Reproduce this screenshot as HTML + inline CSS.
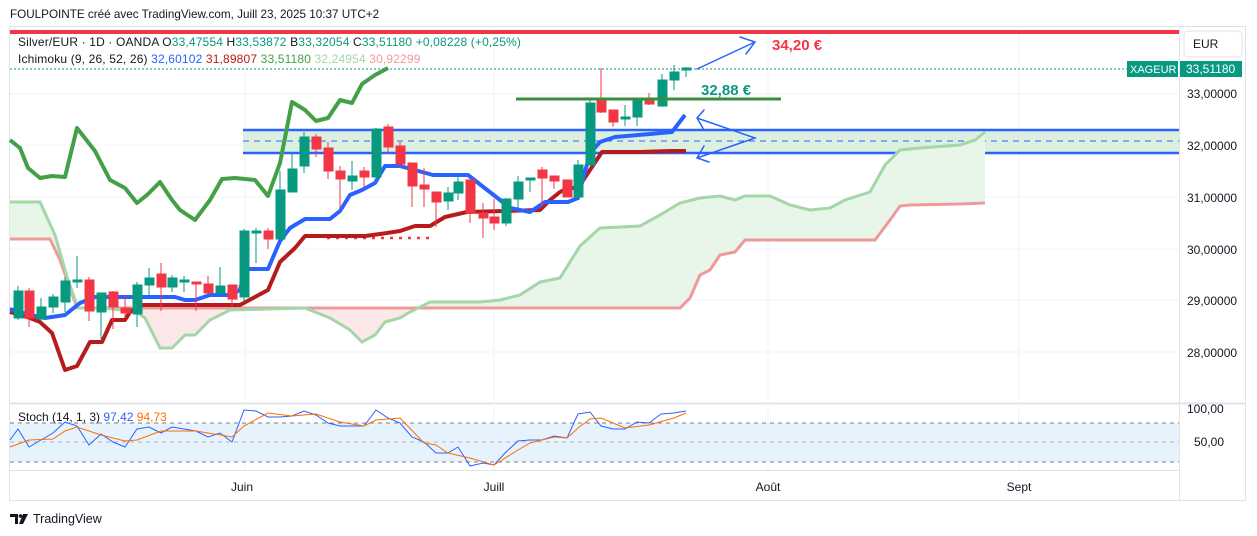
<!DOCTYPE html>
<html><head><meta charset="utf-8"><style>
html,body{margin:0;padding:0;background:#fff;width:1257px;height:536px;overflow:hidden}
svg{display:block;font-family:"Liberation Sans",sans-serif}
</style></head><body>
<svg width="1257" height="536" viewBox="0 0 1257 536" xmlns="http://www.w3.org/2000/svg">
<text x="10" y="18" font-size="11.7" fill="#131722">FOULPOINTE créé avec TradingView.com, Juill 23, 2025 10:37 UTC+2</text>
<rect x="9.5" y="26.5" width="1236" height="474" fill="none" stroke="#e0e3eb"/>
<line x1="1179.5" y1="27" x2="1179.5" y2="500" stroke="#e0e3eb"/>
<line x1="10" y1="403.5" x2="1245" y2="403.5" stroke="#e0e3eb" stroke-width="2"/>
<line x1="10" y1="470.5" x2="1179" y2="470.5" stroke="#e0e3eb"/>
<g stroke="#f0f3fa">
<line x1="10" y1="94" x2="1179" y2="94"/><line x1="10" y1="145" x2="1179" y2="145"/><line x1="10" y1="197" x2="1179" y2="197"/><line x1="10" y1="249" x2="1179" y2="249"/><line x1="10" y1="300" x2="1179" y2="300"/><line x1="10" y1="352" x2="1179" y2="352"/>
<line x1="245" y1="27" x2="245" y2="470"/><line x1="494" y1="27" x2="494" y2="470"/><line x1="768" y1="27" x2="768" y2="470"/><line x1="1019" y1="27" x2="1019" y2="470"/>
</g>
<rect x="10" y="30" width="1169" height="4" fill="#f23645"/>
<rect x="243" y="130" width="936" height="23" fill="#ddf0e0"/>
<line x1="243" y1="130" x2="1179" y2="130" stroke="#2962ff" stroke-width="2.5"/>
<line x1="243" y1="153" x2="1179" y2="153" stroke="#2962ff" stroke-width="2.5"/>
<line x1="243" y1="141" x2="1179" y2="141" stroke="#2962ff" stroke-width="1" stroke-dasharray="6,5"/>
<clipPath id="cg"><rect x="0" y="0" width="72" height="400"/><rect x="420" y="0" width="600" height="400"/></clipPath>
<clipPath id="cr"><rect x="72" y="0" width="348" height="400"/></clipPath>
<polygon clip-path="url(#cg)" fill="#e8f5e9" points="10,202 40,202 55,235 68,280 78,308 100,308 135,311 145,318 160,348 172,348 185,335 195,335 210,320 230,310 305,308 330,318 350,330 362,342 375,335 385,322 400,318 410,312 430,302 480,302 500,300 520,295 540,282 560,278 580,246 600,228 640,226 660,215 680,203 700,198 720,196 735,200 745,196 770,196 790,205 810,210 830,208 845,200 870,192 885,165 900,150 920,148 960,145 975,140 985,132 985,203 960,204 910,205 900,206 890,220 875,240 745,240 735,252 720,255 710,270 700,275 690,298 680,308 78,308 60,260 50,239 10,239"/>
<polygon clip-path="url(#cr)" fill="#fce8e8" points="10,202 40,202 55,235 68,280 78,308 100,308 135,311 145,318 160,348 172,348 185,335 195,335 210,320 230,310 305,308 330,318 350,330 362,342 375,335 385,322 400,318 410,312 430,302 480,302 680,308 78,308"/>
<polyline fill="none" stroke="#ef9a9a" stroke-width="3" points="10,239 50,239 60,260 77,308 680,308 690,298 700,275 710,270 720,255 735,252 745,240 875,240 890,220 900,206 910,205 960,204 985,203"/>
<polyline fill="none" stroke="#a5d6a7" stroke-width="3" points="10,202 40,202 55,235 68,280 78,308 100,308 135,311 145,318 160,348 172,348 185,335 195,335 210,320 230,310 305,308 330,318 350,330 362,342 375,335 385,322 400,318 410,312 430,302 480,302 500,300 520,295 540,282 560,278 580,246 600,228 640,226 660,215 680,203 700,198 720,196 735,200 745,196 770,196 790,205 810,210 830,208 845,200 870,192 885,165 900,150 920,148 960,145 975,140 985,132"/>
<polyline fill="none" stroke="#43a047" stroke-width="4" stroke-linejoin="round" points="10,140 20,148 28,168 40,178 52,176 65,177 77,128 95,151 110,180 125,188 137,203 147,195 160,182 172,200 180,210 195,220 210,200 222,179 235,178 255,180 268,196 280,163 292,102 305,110 316,121 328,118 340,100 352,103 362,84 375,75 388,68"/>
<line x1="10" y1="69" x2="1127" y2="69" stroke="#089981" stroke-width="1" stroke-dasharray="2,2"/>
<line x1="327" y1="238" x2="432" y2="238" stroke="#f23645" stroke-width="2.5" stroke-dasharray="3,6"/>
<polyline fill="none" stroke="#b71c1c" stroke-width="4" stroke-linejoin="round" points="10,312 30,318 40,322 52,333 65,370 77,366 90,342 102,342 112,320 125,320 130,312 140,305 240,305 268,290 280,262 295,248 305,236 365,236 380,234 400,231 415,226 430,226 445,217 467,212 540,210 550,200 560,192 568,188 578,188 590,170 602,152 640,152 670,151 686,151"/>
<polyline fill="none" stroke="#2962ff" stroke-width="4" stroke-linejoin="round" points="10,309 30,315 45,318 65,315 80,303 95,297 175,297 185,300 195,300 210,295 230,295 240,290 245,269 268,269 280,241 290,228 305,219 330,219 340,211 350,195 362,190 375,183 385,166 400,166 433,175 468,175 500,200 510,208 530,212 545,202 568,202 578,198 590,153 600,142 615,137 650,134 672,132 685,115"/>
<g>
<g stroke="#089981" fill="#089981">
<line x1="18" y1="286" x2="18" y2="320"/><rect x="14" y="291" width="9" height="27"/>
<line x1="41" y1="298" x2="41" y2="322"/><rect x="37" y="307" width="9" height="12"/>
<line x1="53" y1="294" x2="53" y2="313"/><rect x="49" y="297" width="9" height="10"/>
<line x1="65" y1="277" x2="65" y2="312"/><rect x="61" y="281" width="9" height="21"/>
<line x1="77" y1="256" x2="77" y2="288"/><rect x="73" y="280" width="9" height="2"/>
<line x1="101" y1="293" x2="101" y2="339"/><rect x="97" y="293" width="9" height="19"/>
<line x1="137" y1="282" x2="137" y2="327"/><rect x="133" y="285" width="9" height="29"/>
<line x1="149" y1="268" x2="149" y2="295"/><rect x="145" y="278" width="9" height="7"/>
<line x1="172" y1="275" x2="172" y2="292"/><rect x="168" y="278" width="9" height="9"/>
<line x1="184" y1="276" x2="184" y2="292"/><rect x="180" y="280" width="9" height="2"/>
<line x1="220" y1="267" x2="220" y2="297"/><rect x="216" y="286" width="9" height="7"/>
<line x1="244" y1="229" x2="244" y2="302"/><rect x="240" y="231" width="9" height="66"/>
<line x1="256" y1="228" x2="256" y2="263"/><rect x="252" y="231" width="9" height="2"/>
<line x1="280" y1="171" x2="280" y2="239"/><rect x="276" y="190" width="9" height="49"/>
<line x1="292" y1="152" x2="292" y2="192"/><rect x="288" y="169" width="9" height="23"/>
<line x1="304" y1="132" x2="304" y2="173"/><rect x="300" y="137" width="9" height="29"/>
<line x1="352" y1="161" x2="352" y2="190"/><rect x="348" y="176" width="9" height="5"/>
<line x1="376" y1="128" x2="376" y2="183"/><rect x="372" y="129" width="9" height="48"/>
<line x1="448" y1="187" x2="448" y2="210"/><rect x="444" y="193" width="9" height="8"/>
<line x1="458" y1="177" x2="458" y2="200"/><rect x="454" y="182" width="9" height="11"/>
<line x1="506" y1="198" x2="506" y2="226"/><rect x="502" y="199" width="9" height="24"/>
<line x1="518" y1="176" x2="518" y2="208"/><rect x="514" y="182" width="9" height="17"/>
<line x1="530" y1="179" x2="530" y2="192"/><rect x="526" y="178" width="9" height="2"/>
<line x1="578" y1="160" x2="578" y2="198"/><rect x="574" y="165" width="9" height="32"/>
<line x1="590" y1="98" x2="590" y2="165"/><rect x="586" y="103" width="9" height="62"/>
<line x1="625" y1="105" x2="625" y2="126"/><rect x="621" y="117" width="9" height="2"/>
<line x1="637" y1="101" x2="637" y2="126"/><rect x="633" y="101" width="9" height="16"/>
<line x1="662" y1="74" x2="662" y2="107"/><rect x="658" y="80" width="9" height="26"/>
<line x1="674" y1="65" x2="674" y2="90"/><rect x="670" y="72" width="9" height="8"/>
<line x1="686" y1="67" x2="686" y2="77"/><rect x="682" y="68" width="9" height="2"/>
</g>
<g stroke="#f23645" fill="#f23645">
<line x1="29" y1="288" x2="29" y2="327"/><rect x="25" y="291" width="9" height="27"/>
<line x1="89" y1="277" x2="89" y2="321"/><rect x="85" y="280" width="9" height="31"/>
<line x1="113" y1="291" x2="113" y2="329"/><rect x="109" y="292" width="9" height="15"/>
<line x1="125" y1="296" x2="125" y2="318"/><rect x="121" y="308" width="9" height="5"/>
<line x1="161" y1="263" x2="161" y2="311"/><rect x="157" y="274" width="9" height="13"/>
<line x1="196" y1="282" x2="196" y2="311"/><rect x="192" y="282" width="9" height="2"/>
<line x1="208" y1="276" x2="208" y2="294"/><rect x="204" y="284" width="9" height="9"/>
<line x1="232" y1="285" x2="232" y2="307"/><rect x="228" y="285" width="9" height="14"/>
<line x1="268" y1="228" x2="268" y2="249"/><rect x="264" y="231" width="9" height="8"/>
<line x1="316" y1="134" x2="316" y2="157"/><rect x="312" y="137" width="9" height="12"/>
<line x1="328" y1="142" x2="328" y2="179"/><rect x="324" y="148" width="9" height="23"/>
<line x1="340" y1="166" x2="340" y2="208"/><rect x="336" y="171" width="9" height="8"/>
<line x1="364" y1="167" x2="364" y2="188"/><rect x="360" y="171" width="9" height="6"/>
<line x1="388" y1="124" x2="388" y2="154"/><rect x="384" y="127" width="9" height="20"/>
<line x1="400" y1="142" x2="400" y2="168"/><rect x="396" y="146" width="9" height="18"/>
<line x1="412" y1="163" x2="412" y2="207"/><rect x="408" y="163" width="9" height="23"/>
<line x1="424" y1="168" x2="424" y2="207"/><rect x="420" y="185" width="9" height="4"/>
<line x1="436" y1="192" x2="436" y2="227"/><rect x="432" y="192" width="9" height="10"/>
<line x1="470" y1="180" x2="470" y2="223"/><rect x="466" y="180" width="9" height="33"/>
<line x1="483" y1="203" x2="483" y2="238"/><rect x="479" y="213" width="9" height="5"/>
<line x1="494" y1="199" x2="494" y2="230"/><rect x="490" y="217" width="9" height="6"/>
<line x1="542" y1="167" x2="542" y2="207"/><rect x="538" y="170" width="9" height="8"/>
<line x1="554" y1="176" x2="554" y2="189"/><rect x="550" y="176" width="9" height="5"/>
<line x1="567" y1="180" x2="567" y2="197"/><rect x="563" y="180" width="9" height="17"/>
<line x1="601" y1="68" x2="601" y2="113"/><rect x="597" y="99" width="9" height="13"/>
<line x1="613" y1="110" x2="613" y2="127"/><rect x="609" y="110" width="9" height="12"/>
<line x1="649" y1="93" x2="649" y2="105"/><rect x="645" y="100" width="9" height="4"/>
</g>
</g>
<line x1="516" y1="99" x2="781" y2="99" stroke="#388e3c" stroke-width="3"/>
<g fill="none" stroke="#2962ff" stroke-width="1.5" stroke-linecap="round">
<path d="M697 69 L755 42 M740 37 L755 42 L746 54"/>
<path d="M697 118 L755 138 L697 158 M704 110 L697 118 L704 130 M704 146 L697 158 L709 162"/>
</g>
<text x="772" y="50" font-size="15" font-weight="bold" fill="#f23645">34,20 €</text>
<text x="701" y="95" font-size="15" font-weight="bold" fill="#089981">32,88 €</text>
<text x="18" y="46" font-size="12" fill="#131722" letter-spacing="0.15">Silver/EUR · 1D · OANDA  O<tspan fill="#089981">33,47554</tspan>  H<tspan fill="#089981">33,53872</tspan>  B<tspan fill="#089981">33,32054</tspan>  C<tspan fill="#089981">33,51180</tspan>  <tspan fill="#089981">+0,08228 (+0,25%)</tspan></text>
<text x="18" y="63" font-size="12" fill="#131722" letter-spacing="0.15">Ichimoku (9, 26, 52, 26)  <tspan fill="#2962ff">32,60102</tspan>  <tspan fill="#b71c1c">31,89807</tspan>  <tspan fill="#43a047">33,51180</tspan>  <tspan fill="#a5d6a7">32,24954</tspan>  <tspan fill="#ef9a9a">30,92299</tspan></text>
<rect x="1184" y="31" width="58" height="26" rx="4" fill="#fff" stroke="#e0e3eb"/>
<text x="1193" y="48" font-size="12" fill="#131722">EUR</text>
<rect x="1127" y="61" width="51" height="16" fill="#089981"/>
<text x="1130" y="73" font-size="11" fill="#fff">XAGEUR</text>
<rect x="1180" y="61" width="62" height="16" fill="#089981"/>
<text x="1186" y="73" font-size="12" fill="#fff">33,51180</text>
<g font-size="12" fill="#131722">
<text x="1187" y="98">33,00000</text><text x="1187" y="150">32,00000</text><text x="1187" y="202">31,00000</text><text x="1187" y="254">30,00000</text><text x="1187" y="305">29,00000</text><text x="1187" y="357">28,00000</text>
<text x="1187" y="413">100,00</text><text x="1194" y="446">50,00</text>
</g>
<rect x="10" y="423" width="1169" height="39" fill="#e3f2fd" opacity="0.9"/>
<g stroke="#787b86" stroke-dasharray="4,4" stroke-width="1">
<line x1="10" y1="423" x2="1179" y2="423"/><line x1="10" y1="442" x2="1179" y2="442" stroke="#b2b5be"/><line x1="10" y1="462" x2="1179" y2="462"/>
</g>
<polyline fill="none" stroke="#2962ff" stroke-width="1" points="10,440 18,429 29,447 41,440 53,433 65,422 77,426 89,445 101,434 113,442 125,447 137,429 149,427 161,433 172,427 184,429 196,431 208,437 220,433 232,442 244,410 256,411 268,417 280,417 292,416 304,411 316,415 328,423 340,426 352,426 364,426 376,410 388,418 400,423 412,437 424,442 436,453 448,453 458,447 470,466 483,463 494,465 506,452 518,441 530,440 542,440 554,436 567,438 578,414 590,412 601,426 613,429 625,429 637,422 649,423 661,414 674,413 686,411"/>
<polyline fill="none" stroke="#ff6d00" stroke-width="1" points="10,447 29,440 53,439 65,431 77,427 101,435 125,441 137,440 161,431 196,431 220,435 232,437 244,426 268,413 292,416 316,414 340,422 364,426 376,420 400,418 424,443 436,445 448,453 470,458 494,465 518,450 530,443 554,437 567,438 578,428 590,419 601,418 613,423 625,428 649,425 674,418 686,413"/>
<text x="18" y="421" font-size="12" fill="#131722">Stoch (14, 1, 3)  <tspan fill="#2962ff">97,42</tspan>  <tspan fill="#ff6d00">94,73</tspan></text>
<g font-size="12" fill="#131722" text-anchor="middle">
<text x="242" y="491">Juin</text><text x="494" y="491">Juill</text><text x="768" y="491">Août</text><text x="1019" y="491">Sept</text>
</g>
<path d="M10 514 H18 V524 H15 V517 H10 Z" fill="#131722"/>
<circle cx="20.5" cy="516" r="1.8" fill="#131722"/>
<path d="M23 514 H28 L23 524 H19 Z" fill="#131722"/>
<text x="33" y="523" font-size="12.5" fill="#131722">TradingView</text>
</svg>
</body></html>
